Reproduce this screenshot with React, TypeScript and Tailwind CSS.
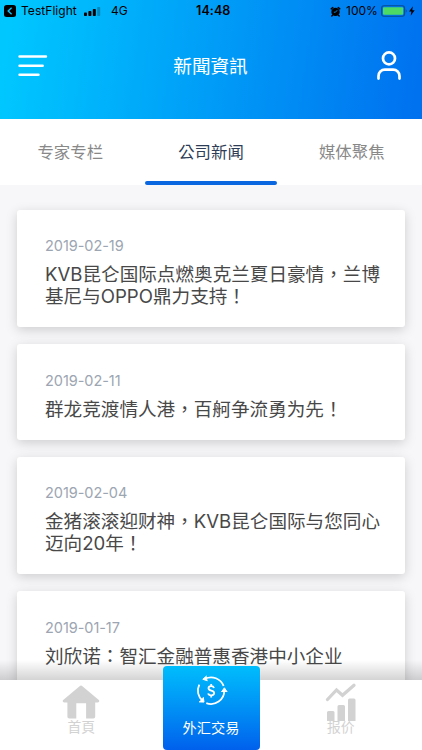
import React from "react";

type Article = { date: string; title: string[] };

const articles: Article[] = [
  { date: "2019-02-19", title: ["KVB昆仑国际点燃奥克兰夏日豪情，兰博", "基尼与OPPO鼎力支持！"] },
  { date: "2019-02-11", title: ["群龙竞渡情人港，百舸争流勇为先！"] },
  { date: "2019-02-04", title: ["金猪滚滚迎财神，KVB昆仑国际与您同心", "迈向20年！"] },
  { date: "2019-01-17", title: ["刘欣诺：智汇金融普惠香港中小企业"] },
];

function StatusBar() {
  return (
    <div className="flex h-[22px] items-center pl-1 pr-[5px] text-black">
      <svg className="h-3 w-3 shrink-0" viewBox="0 0 12 12">
        <rect width="12" height="12" rx="2.5" fill="#000" />
        <path d="M7.6 2.8 4.2 6l3.4 3.2" fill="none" stroke="#08c4fd" strokeWidth="1.4" />
      </svg>
      <span className="ml-[5px] w-[57px] shrink-0 text-[12px] tracking-[0.05px]">TestFlight</span>
      <svg className="ml-[6px] h-[9px] w-[17px] shrink-0" viewBox="0 0 17 9">
        <rect x="0" y="5.5" width="3" height="3.5" rx=".8" />
        <rect x="4.4" y="4" width="3" height="5" rx=".8" />
        <rect x="8.8" y="2" width="3" height="7" rx=".8" />
        <rect x="13.2" y="0" width="3" height="9" rx=".8" opacity=".25" />
      </svg>
      <span className="ml-[10px] w-[85px] shrink-0 text-[12px]">4G</span>
      <span className="w-[134px] shrink-0 text-[12.5px] font-semibold tracking-[0.1px]">14:48</span>
      <svg className="h-[11px] w-[11px] shrink-0" viewBox="0 0 11 11">
        <circle cx="5.5" cy="5.9" r="4.2" />
        <path d="M1.2 2.9 2.8 1.5M9.8 2.9 8.2 1.5M2.8 9l-1 1M8.2 9l1 1" stroke="#000" strokeWidth="1.4" strokeLinecap="round" />
        <path d="M5.5 6.2 7.2 4.2M5.5 6.2H3.8" stroke="#0790f7" strokeWidth=".9" />
      </svg>
      <span className="ml-[5px] w-[33px] shrink-0 text-[12px]">100%</span>
      <svg className="ml-[2px] h-3 w-[27px] shrink-0" viewBox="0 0 27 12">
        <rect x=".6" y=".8" width="23" height="10.4" rx="2.4" fill="none" stroke="#054b92" strokeWidth="1.1" />
        <rect x="2" y="2.2" width="20.2" height="7.6" rx="1" fill="#4cda64" />
        <path d="M24.8 4.5c1.2.3 1.2 2.7 0 3z" fill="#054b92" />
      </svg>
      <svg className="ml-[1px] h-[10px] w-[6px] shrink-0" viewBox="0 0 7 11">
        <path d="M4.5 0 0 6h2.8L2 11l4.6-6.4H3.8z" />
      </svg>
    </div>
  );
}

function Header() {
  return (
    <header className="h-[119px] shrink-0 bg-[linear-gradient(98deg,#00c8ff_2%,#0070ef_100%)]">
      <StatusBar />
      <div className="flex h-[88px] items-center justify-between pl-[18px] pr-[20px]">
        <svg className="h-[24px] w-[30px]" viewBox="0 0 30 24" stroke="#fff" strokeWidth="2.4" strokeLinecap="round">
          <path d="M1.5 2.5h26.5M1.5 11.7h23.2M1.5 20.8h19" />
        </svg>
        <h1 className="mr-[3px] pt-px text-[18.6px] font-normal text-white">新聞資訊</h1>
        <svg className="h-[30px] w-[26px]" viewBox="0 0 26 30" fill="none" stroke="#fff" strokeWidth="2.7" strokeLinecap="round">
          <circle cx="13" cy="7.4" r="6" />
          <path d="M2.5 27.6V25a6.300 6.300 0 0 1 6.300-6.300h8.400a6.300 6.300 0 0 1 6.300 6.300v2.600" />
        </svg>
      </div>
    </header>
  );
}

function Tabs() {
  const tabs = ["专家专栏", "公司新闻", "媒体聚焦"];
  return (
    <nav className="grid h-[65.5px] shrink-0 grid-cols-[140.5px_141px_140.5px] bg-white text-[16.4px]">
      {tabs.map((tab, i) => (
        <div key={tab} className="flex flex-col items-center justify-between">
          <span className={i === 1 ? "pt-[21px] leading-6 text-[#2e3d57]" : "pt-[21px] leading-6 text-[#888]"}>{tab}</span>
          {i === 1 && <span className="h-1 w-[132px] rounded-full bg-[#0a67df]" />}
        </div>
      ))}
    </nav>
  );
}

function NewsCard({ date, title }: Article) {
  return (
    <article className="shrink-0 rounded-[3px] bg-white pb-[20px] pl-[28px] pt-[28.5px] shadow-[0_3px_12px_rgba(0,0,0,0.17)]">
      <time className="block text-[14.5px] leading-4 tracking-[-0.05px] text-[#9ca5b2]">{date}</time>
      <h2 className="mt-[9px] whitespace-nowrap text-[18.6px] font-normal leading-[22px] text-[#484848]">
        {title.map((line) => (
          <span key={line} className="block">{line}</span>
        ))}
      </h2>
    </article>
  );
}

function BottomBar() {
  return (
    <footer className="absolute inset-x-0 bottom-0 flex h-[90px] flex-col">
      <div className="h-[20px] bg-linear-to-b from-black/0 to-black/17" />
      <div className="grid flex-1 grid-cols-[162.5px_97px_162.5px] bg-white text-[13.8px] text-[#d2d2d2]">
        <div className="flex flex-col items-center pt-[5px]">
          <svg className="h-[35px] w-[38px]" viewBox="0 0 38 35" fill="#d2d2d2">
            <path d="M17.6 1.3a2 2 0 0 1 2.8 0L36.8 15c1 1 .3 2.4-1 2.4h-2.600v14.100c0 1.300-.6 2-1.900 2h-7.200V18.200h-9.800v15.300H7.400c-1.300 0-2-.7-2-2V17.400H2.200c-1.300 0-2-1.400-1-2.400z" />
          </svg>
          <span className="-mt-[2px] leading-[18px]">首頁</span>
        </div>
        <div className="-mt-[14px] flex flex-col items-center rounded-[4px] bg-linear-to-b from-[#00bdfc] to-[#0060ec] pt-[9px] text-white">
          <svg className="h-[32px] w-[34px]" viewBox="0 0 34 32" fill="none" stroke="#fff" strokeWidth="1.8">
            <path d="M11 3.800A13.400 13.400 0 0 1 29.600 11" />
            <path d="M30.300 15.500a13.400 13.400 0 0 1-18 12.700" />
            <path d="M8.800 26A13.400 13.400 0 0 1 5.300 9.600" />
            <path d="M12.600.9 8.800 4.300l4.700 1.500M27.400 17l3-4.200 2.800 4.200M5 26.900l5 .2-.7-4.900" fill="#fff" strokeWidth="1" />
            <path d="M20 13c-.4-1.200-1.400-1.800-2.800-1.800-1.600 0-2.700.9-2.700 2.100 0 1.400 1 1.900 2.800 2.300 1.900.4 2.900 1.100 2.900 2.500 0 1.300-1.200 2.200-2.900 2.200s-2.800-.7-3.100-1.900M17.200 9v2.200M17.200 20.300v2.200" />
          </svg>
          <span className="mt-[11px] text-[14.2px] leading-5">外汇交易</span>
        </div>
        <div className="flex flex-col items-center pt-[3px]">
          <svg className="h-[38px] w-[32px]" viewBox="0 0 32 38" fill="#d2d2d2">
            <path d="m2.500 16.500 9-9.500 6 5.300L29 2.200" fill="none" stroke="#d2d2d2" strokeWidth="3.200" strokeLinecap="round" />
            <path d="M2 29.500q0-1.500 1.500-1.500H8q1.500 0 1.500 1.500V38H2zM12.500 23.500q0-1.500 1.500-1.500h4.500q1.500 0 1.500 1.500V38h-7.500zM23 17q0-1.500 1.500-1.500H29q1.500 0 1.500 1.500V38H23z" />
          </svg>
          <span className="-mt-[3px] leading-[18px]">报价</span>
        </div>
      </div>
    </footer>
  );
}

export default function App() {
  return (
    <div className="relative flex h-[750px] w-[422px] flex-col overflow-hidden bg-[#f7f7fa] font-['Inter','Noto_Sans_CJK_TC',sans-serif]">
      <Header />
      <Tabs />
      <main className="flex min-h-0 flex-1 flex-col gap-[17px] overflow-hidden px-[17px] pt-[25px]">
        {articles.map((article) => (
          <NewsCard key={article.date} {...article} />
        ))}
      </main>
      <BottomBar />
    </div>
  );
}
